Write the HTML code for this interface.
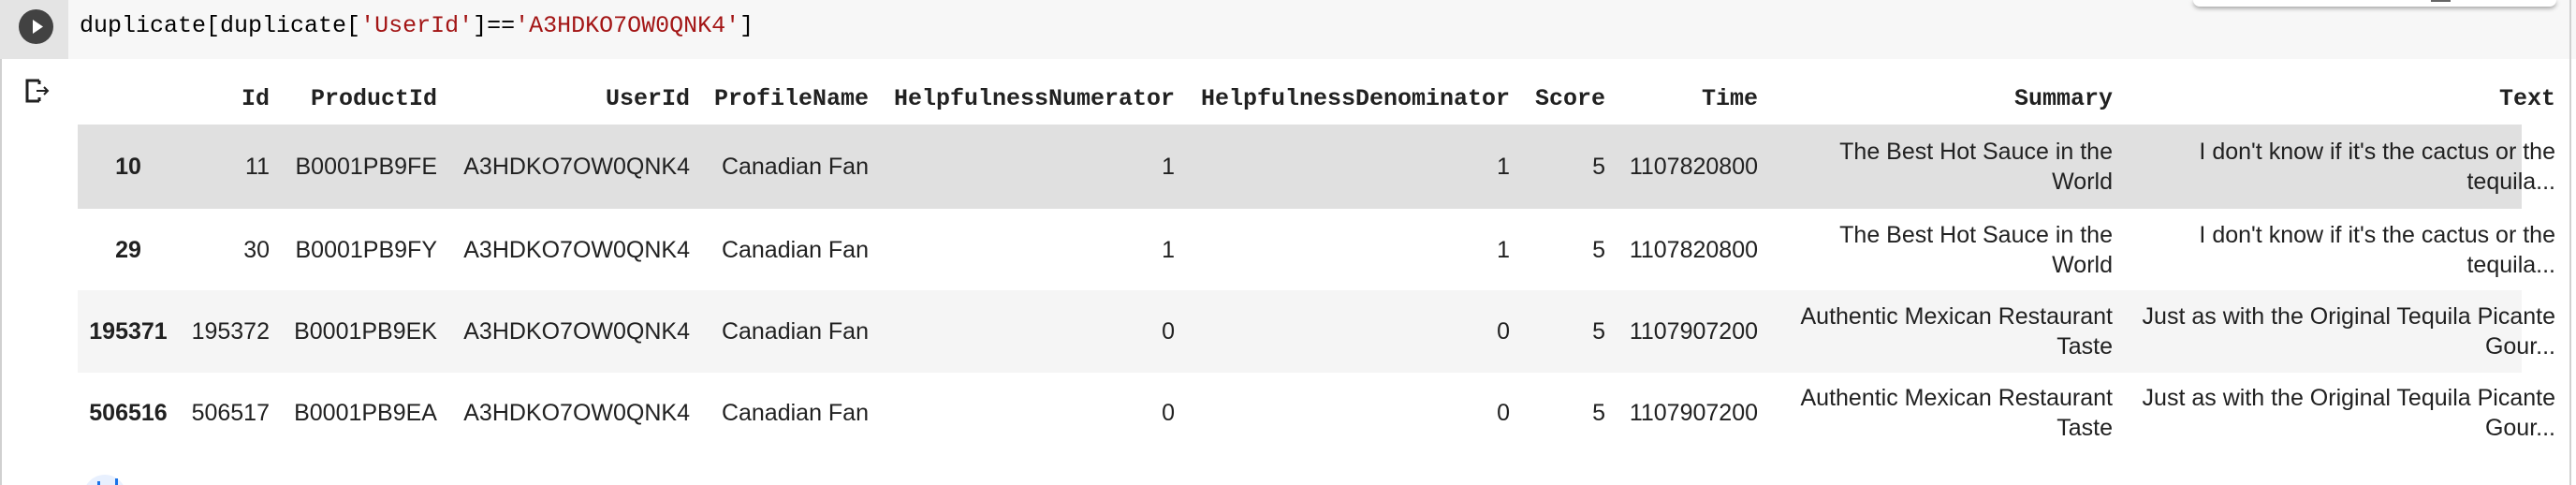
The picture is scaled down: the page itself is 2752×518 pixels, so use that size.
<!DOCTYPE html>
<html><head><meta charset="utf-8"><style>
html,body{margin:0;padding:0;width:2752px;height:518px;overflow:hidden;}
body{position:relative;background:#fff;font-family:"Liberation Sans",Arial,sans-serif;color:#212121;}
.a{position:absolute;white-space:nowrap;}
.code{position:absolute;left:0;top:0;width:2752px;height:63px;background:#f7f7f7;}
.gut{position:absolute;left:0;top:0;width:73px;height:63px;background:#e4e4e4;}
.run{position:absolute;left:20px;top:10px;width:37px;height:37px;border-radius:50%;background:#424242;}
.ct{position:absolute;left:85px;top:12px;font:25px/32px "Liberation Mono",monospace;color:#000;white-space:pre;}
.s{color:#a31515;}
.h{font:bold 25px/32px "Liberation Mono",monospace;color:#212121;top:90px;}
.d{font-size:25px;line-height:32px;}
.r{text-align:right;}
.row{position:absolute;left:83px;width:2611px;}
.b{font-weight:bold;}
</style></head><body>
<div class="code"><div class="gut"></div><div class="run"><svg width="37" height="37" viewBox="0 0 37 37"><path d="M15 11 L26 18.5 L15 26 Z" fill="#fff"/></svg></div>
<div class="ct">duplicate[duplicate[<span class="s">'UserId'</span>]==<span class="s">'A3HDKO7OW0QNK4'</span>]</div></div>
<div class="a" style="left:2343px;top:0;width:388px;height:7px;background:#fff;border-radius:0 0 7px 7px;box-shadow:0 2px 5px rgba(0,0,0,.35);"></div>
<div class="a" style="left:2597px;top:0;width:21px;height:2px;background:#666;"></div>
<div class="a" style="left:0;top:63px;width:2px;height:455px;background:#d0d0d0;"></div>
<div class="a" style="left:2745px;top:0;width:2px;height:518px;background:#d0d0d0;"></div>
<svg class="a" style="left:27px;top:84px" width="28" height="26" viewBox="0 0 28 26"><path d="M15 2 H2 V24 H15 M15 2 V6 M15 24 V20" fill="none" stroke="#212121" stroke-width="3"/><path d="M12 13 H24 M20 9 L24 13 L20 17" fill="none" stroke="#212121" stroke-width="2"/></svg>

<div class="row" style="top:133px;height:90px;background:#e0e0e0"></div>
<div class="row" style="top:310px;height:88px;background:#f5f5f5"></div>

<div class="a h r" style="right:calc(2752px - 288px)">Id</div>
<div class="a h r" style="right:calc(2752px - 467px)">ProductId</div>
<div class="a h r" style="right:calc(2752px - 737px)">UserId</div>
<div class="a h r" style="right:calc(2752px - 928px)">ProfileName</div>
<div class="a h r" style="right:calc(2752px - 1255px)">HelpfulnessNumerator</div>
<div class="a h r" style="right:calc(2752px - 1613px)">HelpfulnessDenominator</div>
<div class="a h r" style="right:calc(2752px - 1715px)">Score</div>
<div class="a h r" style="right:calc(2752px - 1878px)">Time</div>
<div class="a h r" style="right:calc(2752px - 2257px)">Summary</div>
<div class="a h r" style="right:calc(2752px - 2730px)">Text</div>

<div class="a d b" style="left:97px;width:80px;text-align:center;top:162px">10</div>
<div class="a d b" style="left:97px;width:80px;text-align:center;top:251px">29</div>
<div class="a d b" style="left:87px;width:100px;text-align:center;top:338px">195371</div>
<div class="a d b" style="left:87px;width:100px;text-align:center;top:425px">506516</div>

<div class="a d r" style="right:calc(2752px - 288px);top:162px">11</div>
<div class="a d r" style="right:calc(2752px - 288px);top:251px">30</div>
<div class="a d r" style="right:calc(2752px - 288px);top:338px">195372</div>
<div class="a d r" style="right:calc(2752px - 288px);top:425px">506517</div>

<div class="a d r" style="right:calc(2752px - 467px);top:162px">B0001PB9FE</div>
<div class="a d r" style="right:calc(2752px - 467px);top:251px">B0001PB9FY</div>
<div class="a d r" style="right:calc(2752px - 467px);top:338px">B0001PB9EK</div>
<div class="a d r" style="right:calc(2752px - 467px);top:425px">B0001PB9EA</div>

<div class="a d r" style="right:calc(2752px - 737px);top:162px">A3HDKO7OW0QNK4</div>
<div class="a d r" style="right:calc(2752px - 737px);top:251px">A3HDKO7OW0QNK4</div>
<div class="a d r" style="right:calc(2752px - 737px);top:338px">A3HDKO7OW0QNK4</div>
<div class="a d r" style="right:calc(2752px - 737px);top:425px">A3HDKO7OW0QNK4</div>

<div class="a d r" style="right:calc(2752px - 928px);top:162px">Canadian Fan</div>
<div class="a d r" style="right:calc(2752px - 928px);top:251px">Canadian Fan</div>
<div class="a d r" style="right:calc(2752px - 928px);top:338px">Canadian Fan</div>
<div class="a d r" style="right:calc(2752px - 928px);top:425px">Canadian Fan</div>

<div class="a d r" style="right:calc(2752px - 1255px);top:162px">1</div>
<div class="a d r" style="right:calc(2752px - 1255px);top:251px">1</div>
<div class="a d r" style="right:calc(2752px - 1255px);top:338px">0</div>
<div class="a d r" style="right:calc(2752px - 1255px);top:425px">0</div>

<div class="a d r" style="right:calc(2752px - 1613px);top:162px">1</div>
<div class="a d r" style="right:calc(2752px - 1613px);top:251px">1</div>
<div class="a d r" style="right:calc(2752px - 1613px);top:338px">0</div>
<div class="a d r" style="right:calc(2752px - 1613px);top:425px">0</div>

<div class="a d r" style="right:calc(2752px - 1715px);top:162px">5</div>
<div class="a d r" style="right:calc(2752px - 1715px);top:251px">5</div>
<div class="a d r" style="right:calc(2752px - 1715px);top:338px">5</div>
<div class="a d r" style="right:calc(2752px - 1715px);top:425px">5</div>

<div class="a d r" style="right:calc(2752px - 1878px);top:162px">1107820800</div>
<div class="a d r" style="right:calc(2752px - 1878px);top:251px">1107820800</div>
<div class="a d r" style="right:calc(2752px - 1878px);top:338px">1107907200</div>
<div class="a d r" style="right:calc(2752px - 1878px);top:425px">1107907200</div>

<div class="a d r" style="right:calc(2752px - 2257px);top:146px">The Best Hot Sauce in the<br>World</div>
<div class="a d r" style="right:calc(2752px - 2257px);top:235px">The Best Hot Sauce in the<br>World</div>
<div class="a d r" style="right:calc(2752px - 2257px);top:322px">Authentic Mexican Restaurant<br>Taste</div>
<div class="a d r" style="right:calc(2752px - 2257px);top:409px">Authentic Mexican Restaurant<br>Taste</div>

<div class="a d r" style="right:calc(2752px - 2730px);top:146px">I don't know if it's the cactus or the<br>tequila...</div>
<div class="a d r" style="right:calc(2752px - 2730px);top:235px">I don't know if it's the cactus or the<br>tequila...</div>
<div class="a d r" style="right:calc(2752px - 2730px);top:322px">Just as with the Original Tequila Picante<br>Gour...</div>
<div class="a d r" style="right:calc(2752px - 2730px);top:409px">Just as with the Original Tequila Picante<br>Gour...</div>

<svg class="a" style="left:89px;top:507px" width="46" height="11" viewBox="0 0 46 11"><circle cx="23" cy="23" r="23" fill="#e8f0fe"/><rect x="15" y="7" width="3" height="4" fill="#1a73e8"/><rect x="34" y="4" width="3" height="7" fill="#1a73e8"/></svg>
</body></html>
